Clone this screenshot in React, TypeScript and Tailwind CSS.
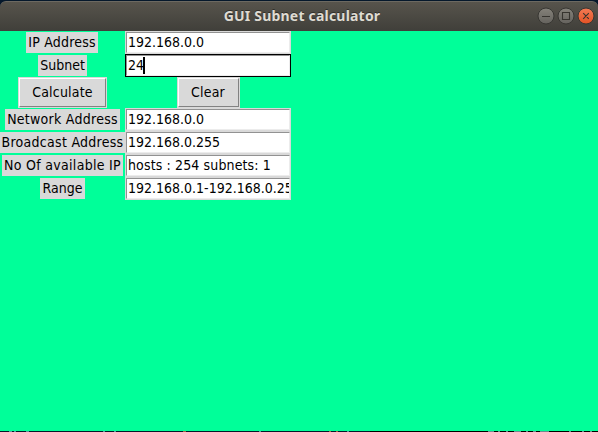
import type { ReactNode } from 'react';

const uiFont = "font-['DejaVu_Sans_Condensed','DejaVu_Sans',sans-serif] [font-stretch:condensed] text-[14px] leading-[19px] text-black whitespace-pre";

function Label({ children, width }: { children: ReactNode; width: string }) {
  return <div className={`${width} flex h-[21px] items-center justify-center bg-[#d9d9d9]`}>{children}</div>;
}

function Entry({ value, focused = false, tracking = '' }: { value: string; focused?: boolean; tracking?: string }) {
  return (
    <div className={`h-[23px] w-[166px] border ${focused ? 'border-black' : 'border-[#d9d9d9]'}`}>
      <div className="flex h-full items-center overflow-hidden border border-t-[#929292] border-l-[#929292] border-r-[#ececec] border-b-[#ececec] bg-white pl-px">
        <span className={`shrink-0 ${tracking}`}>{value}</span>
        {focused && <span className="-ml-px h-[17px] w-[2px] shrink-0 bg-black" />}
      </div>
    </div>
  );
}

function Button({ children, width }: { children: ReactNode; width: string }) {
  return (
    <button className={`${width} h-[31px] border border-[#d9d9d9] tracking-[0.2px]`}>
      <span className="flex h-full items-center justify-center border border-t-white border-l-white border-r-[#828282] border-b-[#828282] bg-[#d9d9d9]">
        {children}
      </span>
    </button>
  );
}

type RowProps = { label: string; width: string; value: string; focused?: boolean; valueTracking?: string };

function Row({ label, width, value, focused, valueTracking }: RowProps) {
  return (
    <div className="grid h-[23px] grid-cols-[125px_166px] items-center">
      <div className="flex justify-center"><Label width={width}>{label}</Label></div>
      <Entry value={value} focused={focused} tracking={valueTracking} />
    </div>
  );
}

function WindowControls() {
  return (
    <svg className="h-[29px] w-[62px]" viewBox="536 2 62 29" fill="none">
      <defs>
        <linearGradient id="gray" x1="0" y1="0" x2="0" y2="1">
          <stop stopColor="#85827a" /><stop offset="1" stopColor="#64625d" />
        </linearGradient>
        <linearGradient id="orange" x1="0" y1="0" x2="0" y2="1">
          <stop stopColor="#f37b55" /><stop offset="1" stopColor="#e35224" />
        </linearGradient>
      </defs>
      <circle cx="546" cy="16" r="8" fill="url(#gray)" stroke="#373632" />
      <circle cx="566" cy="16" r="8" fill="url(#gray)" stroke="#373632" />
      <circle cx="586" cy="16" r="8" fill="url(#orange)" stroke="#373632" />
      <path d="M542 16.5H550M562.5 12.5H569.5V19.5H562.5ZM583.2 13.2L588.8 18.8M588.8 13.2L583.2 18.8" stroke="#36342f" strokeWidth="1.1" />
    </svg>
  );
}

function DesktopEdge() {
  return (
    <svg className="h-px w-[598px]" viewBox="0 0 598 1" shapeRendering="crispEdges">
      <path d="M370 0H598V1H370Z" fill="#000" />
      <path d="M9 0h3v1h-3zM14 0h2v1h-2zM26 0h3v1h-3zM103 0h2v1h-2zM114 0h2v1h-2zM259 0h2v1h-2zM347 0h2v1h-2z" fill="#5d98a0" />
      <path d="M183 0h3v1h-3zM329 0h2v1h-2zM336 0h2v1h-2z" fill="#a56249" />
      <path d="M488 0h6v1h-6zM498 0h2v1h-2zM506 0h2v1h-2zM514 0h7v1h-7zM526 0h2v1h-2zM533 0h3v1h-3zM540 0h9v1h-9zM569 0h2v1h-2zM582 0h2v1h-2zM590 0h2v1h-2z" fill="#6d8a90" />
    </svg>
  );
}

export default function App() {
  return (
    <div className="flex h-[432px] w-[598px] flex-col overflow-hidden bg-[#05182b]">
      <header className="mt-px grid h-[30px] grid-cols-[66px_1fr_62px] items-center rounded-t-[6px] border-t border-[#6c6961] bg-linear-to-b from-[#57544c] to-[#403f3a]">
        <div />
        <h1 className="-mt-0.5 pl-0.5 text-center font-['Noto_Sans',sans-serif] text-[14px] leading-[20px] font-bold tracking-[0.2px] text-[#dfdbd2] [text-shadow:0_-1px_#302f2b]">GUI Subnet calculator</h1>
        <WindowControls />
      </header>
      <main className={`h-[400px] bg-[#00ff99] ${uiFont}`}>
        <Row label="IP Address" width="w-[72px] mr-px tracking-[0.2px]" value="192.168.0.0" />
        <Row label="Subnet" width="w-[49px]" value="24" focused />
        <div className="grid h-[31px] grid-cols-[125px_166px]">
          <div className="flex justify-center"><Button width="w-[89px]">Calculate</Button></div>
          <div className="flex justify-center"><Button width="w-[63px]">Clear</Button></div>
        </div>
        <Row label="Network Address" width="w-[115px] tracking-[0.27px]" value="192.168.0.0" />
        <Row label="Broadcast Address" width="w-[125px] tracking-[0.28px]" value="192.168.0.255" />
        <Row label="No Of available IP" width="w-[121px] tracking-[0.3px]" value="hosts : 254 subnets: 1" valueTracking="tracking-[0.13px]" />
        <Row label="Range" width="w-[45px]" value="192.168.0.1-192.168.0.254" />
      </main>
      <DesktopEdge />
    </div>
  );
}
